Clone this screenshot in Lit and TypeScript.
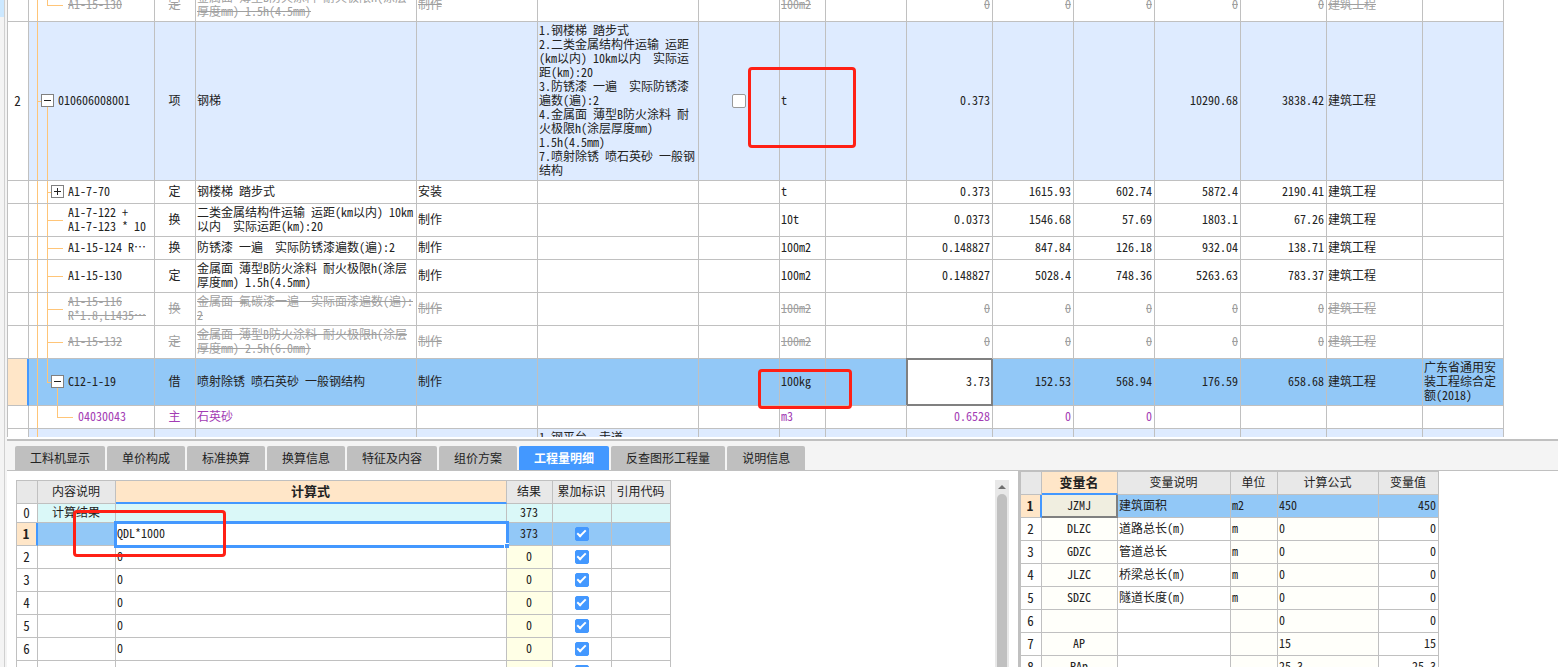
import { LitElement, html, css, nothing } from "lit";
import { customElement } from "lit/decorators.js";
import { classMap } from "lit/directives/class-map.js";

type Branch = "item" | "open" | "closed" | "leaf" | "last-open" | "child" | "trunk";

interface EstimateRow {
  no?: string;
  branch: Branch;
  code: string;
  cut?: boolean;
  kind: string;
  name: string;
  work?: string;
  feature?: string;
  tick?: boolean;
  unit: string;
  values: string[];
  major?: string;
  note?: string;
  tone?: "struck" | "group" | "current" | "material" | "group tail";
}

const ESTIMATE: EstimateRow[] = [
  { branch: "last-open", code: "A1-15-130", kind: "定", name: "金属面 薄型B防火涂料 耐火极限h(涂层\n厚度mm) 1.5h(4.5mm)", work: "制作", unit: "100m2", values: ["0", "0", "0", "0", "0"], major: "建筑工程", tone: "struck" },
  {
    no: "2", branch: "item", code: "010606008001", kind: "项", name: "钢梯",
    feature: "1.钢楼梯 踏步式\n2.二类金属结构件运输 运距\n(km以内) 10km以内  实际运\n距(km):20\n3.防锈漆 一遍  实际防锈漆\n遍数(遍):2\n4.金属面 薄型B防火涂料 耐\n火极限h(涂层厚度mm)\n1.5h(4.5mm)\n7.喷射除锈 喷石英砂 一般钢\n结构",
    tick: true, unit: "t", values: ["0.373", "", "", "10290.68", "3838.42"], major: "建筑工程", tone: "group",
  },
  { branch: "closed", code: "A1-7-70", kind: "定", name: "钢楼梯 踏步式", work: "安装", unit: "t", values: ["0.373", "1615.93", "602.74", "5872.4", "2190.41"], major: "建筑工程" },
  { branch: "leaf", code: "A1-7-122 +\nA1-7-123 * 10", kind: "换", name: "二类金属结构件运输 运距(km以内) 10km\n以内  实际运距(km):20", work: "制作", unit: "10t", values: ["0.0373", "1546.68", "57.69", "1803.1", "67.26"], major: "建筑工程" },
  { branch: "leaf", code: "A1-15-124 R", cut: true, kind: "换", name: "防锈漆 一遍  实际防锈漆遍数(遍):2", work: "制作", unit: "100m2", values: ["0.148827", "847.84", "126.18", "932.04", "138.71"], major: "建筑工程" },
  { branch: "leaf", code: "A1-15-130", kind: "定", name: "金属面 薄型B防火涂料 耐火极限h(涂层\n厚度mm) 1.5h(4.5mm)", work: "制作", unit: "100m2", values: ["0.148827", "5028.4", "748.36", "5263.63", "783.37"], major: "建筑工程" },
  { branch: "leaf", code: "A1-15-116\nR*1.8,L1435", cut: true, kind: "换", name: "金属面 氟碳漆一遍  实际面漆遍数(遍):\n2", work: "制作", unit: "100m2", values: ["0", "0", "0", "0", "0"], major: "建筑工程", tone: "struck" },
  { branch: "leaf", code: "A1-15-132", kind: "定", name: "金属面 薄型B防火涂料 耐火极限h(涂层\n厚度mm) 2.5h(6.0mm)", work: "制作", unit: "100m2", values: ["0", "0", "0", "0", "0"], major: "建筑工程", tone: "struck" },
  { branch: "open", code: "C12-1-19", kind: "借", name: "喷射除锈 喷石英砂 一般钢结构", work: "制作", unit: "100kg", values: ["3.73", "152.53", "568.94", "176.59", "658.68"], major: "建筑工程", note: "广东省通用安\n装工程综合定\n额(2018)", tone: "current" },
  { branch: "child", code: "04030043", kind: "主", name: "石英砂", unit: "m3", values: ["0.6528", "0", "0", "", ""], tone: "material" },
  { branch: "trunk", code: "", kind: "", name: "", feature: "1.钢平台、走道", unit: "", values: ["", "", "", "", ""], tone: "group tail" },
];

const ESTIMATE_COLUMNS = [22, 126, 41, 221, 121, 161, 81, 46, 81, 86, 81, 81, 86, 86, 96, 81];
const FORMULA_COLUMNS = [22, 78, 391, 46, 59, 59];
const VARIABLE_COLUMNS = [22, 76, 113, 47, 101, 60];

const TABS = ["工料机显示", "单价构成", "标准换算", "换算信息", "特征及内容", "组价方案", "工程量明细", "反查图形工程量", "说明信息"];
const ACTIVE_TAB = "工程量明细";

const VARIABLES: string[][] = [
  ["JZMJ", "建筑面积", "m2", "450", "450"],
  ["DLZC", "道路总长(m)", "m", "0", "0"],
  ["GDZC", "管道总长", "m", "0", "0"],
  ["JLZC", "桥梁总长(m)", "m", "0", "0"],
  ["SDZC", "隧道长度(m)", "m", "0", "0"],
  ["", "", "", "0", "0"],
  ["AP", "", "", "15", "15"],
  ["PAp", "", "", "25.3", "25.3"],
];

const total = (widths: number[]) => widths.reduce((sum, w) => sum + w, 0);
const columns = (widths: number[]) => html`<colgroup>${widths.map((w) => html`<col style="width:${w}px">`)}</colgroup>`;

const sheet = css`
  :host {
    display: block;
  }
  table {
    border-collapse: separate;
    border-spacing: 0;
    table-layout: fixed;
  }
  td,
  th {
    box-sizing: border-box;
    height: 23px;
    padding: 1px 2px 3px 1px;
    border: 0 solid #c0c0c0;
    border-width: 0 1px 1px 0;
    font-weight: 400;
    line-height: 14px;
    text-align: left;
    white-space: pre;
    overflow: hidden;
  }
  tr > :first-child {
    border-left-width: 1px;
  }
  .num {
    text-align: right;
  }
  .mid,
  .row-no {
    text-align: center;
  }
  .row-no {
    padding: 2px 2px 2px 1px;
    font-size: 13px;
  }
  .top-edge th {
    border-top-width: 1px;
    height: 24px;
    background: #e8e8e8;
    text-align: center;
  }
  .top-edge .picked {
    background: #ffe6c8;
    border-bottom: 2px solid #4398ff;
    font-size: 13px;
    font-weight: 700;
  }
  .current > .row-no {
    background: #ffe6c8;
    border-right: 2px solid #4398ff;
    font-weight: 700;
  }
  input[type="checkbox"] {
    appearance: none;
    box-sizing: border-box;
    display: inline-grid;
    place-items: center;
    width: 14px;
    height: 14px;
    margin: 0;
    border: 1px solid #999;
    border-radius: 2px;
    background: #fff;
    vertical-align: middle;
  }
  input[type="checkbox"]:checked {
    border-color: #4398ff;
    background: #4398ff;
  }
  input[type="checkbox"]:checked::after {
    content: "";
    width: 7px;
    height: 3px;
    margin-bottom: 3px;
    border: solid #fff;
    border-width: 0 0 2px 2px;
    transform: rotate(-45deg);
  }
  .entry {
    display: block;
    box-sizing: border-box;
    width: 100%;
    padding: 0;
    border: 0;
    outline: 0;
    background: none;
    color: inherit;
    font: inherit;
    text-align: inherit;
  }
`;

@customElement("estimate-sheet")
export class EstimateSheet extends LitElement {
  static styles = [
    sheet,
    css`
      :host {
        overflow: hidden;
      }
      table {
        margin-top: -11px;
      }
      .struck > td {
        color: #a0a0a0;
        text-decoration: line-through;
      }
      .material > td {
        color: #a33cb4;
      }
      .group > td {
        background-color: #deebff;
      }
      .current > td {
        background-color: #92c8f7;
      }
      .tail > td {
        vertical-align: top;
      }
      .tree {
        --wire: linear-gradient(#ffc578, #ffc578);
        padding-left: 39px;
        background-repeat: no-repeat;
      }
      .tree > .line {
        display: flex;
        align-items: center;
      }
      .item {
        padding-left: 12px;
        background-image: var(--wire), var(--wire), var(--wire);
        background-position: 8px 0, 8px 50%, 18px 100%;
        background-size: 1px 100%, 4px 1px, 1px 50%;
      }
      .closed {
        padding-left: 22px;
        background-image: var(--wire), var(--wire), var(--wire);
        background-position: 8px 0, 18px 0, 18px 50%;
        background-size: 1px 100%, 1px 100%, 4px 1px;
      }
      .open {
        padding-left: 22px;
        background-image: var(--wire), var(--wire), var(--wire), var(--wire);
        background-position: 8px 0, 18px 0, 18px 50%, 28px 100%;
        background-size: 1px 100%, 1px 50%, 4px 1px, 1px 50%;
      }
      .leaf {
        background-image: var(--wire), var(--wire), var(--wire);
        background-position: 8px 0, 18px 0, 18px 50%;
        background-size: 1px 100%, 1px 100%, 16px 1px;
      }
      .last-open {
        background-image: var(--wire), var(--wire), var(--wire);
        background-position: 8px 0, 18px 0, 18px 50%;
        background-size: 1px 100%, 1px 50%, 16px 1px;
      }
      .child {
        padding-left: 49px;
        background-image: var(--wire), var(--wire), var(--wire);
        background-position: 8px 0, 28px 0, 28px 50%;
        background-size: 1px 100%, 1px 50%, 16px 1px;
      }
      .trunk {
        background-image: var(--wire);
        background-position: 8px 0;
        background-size: 1px 100%;
      }
      .more {
        font-feature-settings: normal;
      }
      .toggle {
        box-sizing: border-box;
        display: block;
        flex: none;
        width: 13px;
        height: 13px;
        margin: 0 4px 0 0;
        padding: 0;
        border: 1px solid #808080;
        background: #fff;
        white-space: normal;
      }
      .toggle svg {
        display: block;
      }
      .current > .focus {
        background: #fff;
        border-color: #808080;
        box-shadow: -1px -1px 0 #808080, inset 0 0 0 1px #808080;
      }
    `,
  ];

  private toggle(row: EstimateRow) {
    if (!["item", "open", "closed"].includes(row.branch)) return nothing;
    const closed = row.branch === "closed";
    return html`<button class="toggle" aria-label=${closed ? "展开" : "折叠"}>
      <svg width="11" height="11" viewBox="0 0 11 11" stroke="#222" fill="none">
        <path d=${closed ? "M2 5.5H9M5.5 2V9" : "M2 5.5H9"} />
      </svg>
    </button>`;
  }

  private row(row: EstimateRow) {
    const current = row.tone === "current";
    return html`<tr class=${row.tone ?? ""}>
      <th class="row-no" scope="row">${row.no ?? ""}</th>
      <td class="tree ${row.branch}"><div class="line">${this.toggle(row)}<span>${row.code}${row.cut ? html`<span class="more" lang="zh-CN">⋯</span>` : nothing}</span></div></td>
      <td class="mid">${row.kind}</td>
      <td>${row.name}</td>
      <td>${row.work ?? ""}</td>
      <td>${row.feature ?? ""}</td>
      <td class="mid">${row.tick ? html`<input type="checkbox" aria-label="主要清单">` : nothing}</td>
      <td>${row.unit}</td>
      <td></td>
      ${row.values.map((v, i) =>
        current && i === 0
          ? html`<td class="num focus"><input class="entry" aria-label="工程量" .value=${v}></td>`
          : html`<td class="num">${v}</td>`
      )}
      <td>${row.major ?? ""}</td>
      <td>${row.note ?? ""}</td>
    </tr>`;
  }

  render() {
    return html`<table style="width:${total(ESTIMATE_COLUMNS)}px">${columns(ESTIMATE_COLUMNS)}<tbody>${ESTIMATE.map((r) => this.row(r))}</tbody></table>`;
  }
}

@customElement("formula-sheet")
export class FormulaSheet extends LitElement {
  static styles = [
    sheet,
    css`
      .total > td {
        background: #daf8f8;
      }
      .total > td,
      .total > th {
        height: 19px;
      }
      .result {
        background: #ffffe6;
      }
      .current > td {
        background: #92c8f7;
      }
      .current > .editing {
        position: relative;
        overflow: visible;
        background: #fff;
        outline: 3px solid #4398ff;
        outline-offset: -1px;
      }
      .handle {
        position: absolute;
        right: -3px;
        bottom: -3px;
        width: 4px;
        height: 4px;
        border: 1px solid #fff;
        border-width: 1px 0 0 1px;
        background: #4398ff;
      }
    `,
  ];

  render() {
    return html`<table style="width:${total(FORMULA_COLUMNS)}px">
      ${columns(FORMULA_COLUMNS)}
      <thead>
        <tr class="top-edge">
          <th></th>
          <th>内容说明</th>
          <th class="picked">计算式</th>
          <th>结果</th>
          <th>累加标识</th>
          <th>引用代码</th>
        </tr>
      </thead>
      <tbody>
        <tr class="total">
          <th class="row-no" scope="row">0</th>
          <td class="mid">计算结果</td>
          <td></td>
          <td class="mid">373</td>
          <td></td>
          <td></td>
        </tr>
        ${[1, 2, 3, 4, 5, 6, 7].map((n) => html`<tr class=${classMap({ current: n === 1 })}>
          <th class="row-no" scope="row">${n}</th>
          <td></td>
          ${n === 1
            ? html`<td class="editing"><input class="entry" aria-label="计算式" .value=${"QDL*1000"}><span class="handle"></span></td>`
            : html`<td>0</td>`}
          <td class="mid result">${n === 1 ? "373" : "0"}</td>
          <td class="mid"><input type="checkbox" aria-label="累加标识" checked></td>
          <td></td>
        </tr>`)}
      </tbody>
    </table>`;
  }
}

@customElement("variable-sheet")
export class VariableSheet extends LitElement {
  static styles = [
    sheet,
    css`
      .soft {
        background: #fffffa;
      }
      .current > td {
        background: #92c8f7;
      }
      .current > .focus {
        background: #f0eee0;
        border-color: #808080;
        box-shadow: inset -1px -1px 0 #808080;
      }
    `,
  ];

  render() {
    return html`<table style="width:${total(VARIABLE_COLUMNS)}px">
      ${columns(VARIABLE_COLUMNS)}
      <thead>
        <tr class="top-edge">
          <th></th>
          <th class="picked">变量名</th>
          <th>变量说明</th>
          <th>单位</th>
          <th>计算公式</th>
          <th>变量值</th>
        </tr>
      </thead>
      <tbody>
        ${VARIABLES.map(([name, text, unit, formula, value], i) => html`<tr class=${classMap({ current: i === 0 })}>
          <th class="row-no" scope="row">${i + 1}</th>
          <td class="mid soft focus">${name}</td>
          <td>${text}</td>
          <td class="soft">${unit}</td>
          <td class="soft">${formula}</td>
          <td class="num">${value}</td>
        </tr>`)}
      </tbody>
    </table>`;
  }
}

@customElement("app-root")
export class AppRoot extends LitElement {
  static styles = css`
    :host {
      position: relative;
      display: grid;
      grid-template-columns: 7px minmax(0, 1fr);
      grid-template-rows: minmax(0, 1fr);
      height: 100vh;
      overflow: hidden;
      background: #fff;
      color: #222;
      font-family: "Noto Sans CJK SC", sans-serif;
      font-size: 12px;
      line-height: 14px;
      font-feature-settings: "hwid";
    }
    .rail {
      display: grid;
      grid-template-columns: 4px 1px 2px;
      background: #f4f4f4;
    }
    .rail-mark {
      height: 17px;
      background: #cce8ff;
    }
    .rail-line {
      background: #d0d0d0;
    }
    .work {
      display: grid;
      grid-template-rows: minmax(0, 441fr) minmax(0, 226fr);
      min-height: 0;
    }
    .upper {
      display: flex;
      flex-direction: column;
      min-height: 0;
      padding-bottom: 2px;
      border-bottom: 2px solid #c0c0c0;
    }
    .upper estimate-sheet {
      flex: 1;
      min-height: 0;
    }
    .lower {
      display: flex;
      flex-direction: column;
      min-height: 0;
    }
    .tabs {
      display: flex;
      gap: 2px;
      padding: 5px 8px 0;
      border-bottom: 1px solid #c0c0c0;
      background: #f4f4f4;
    }
    .tab {
      height: 24px;
      padding: 0 15px;
      border: 0;
      border-radius: 2px 2px 0 0;
      background: #bfbfbf;
      color: #222;
      font: inherit;
      white-space: nowrap;
    }
    .tab[aria-selected="true"] {
      background: #4398ff;
      color: #fff;
      font-weight: 700;
    }
    .panels {
      display: grid;
      grid-template-columns: minmax(0, 1011fr) minmax(0, 540fr);
      grid-template-rows: minmax(0, 1fr);
      flex: 1;
      min-height: 0;
      overflow: hidden;
    }
    .formulas {
      display: flex;
      justify-content: space-between;
      min-height: 0;
      padding: 9px 9px 0;
    }
    .scroll {
      display: flex;
      flex-direction: column;
      align-items: center;
      width: 14px;
      background: #e8e8e8;
    }
    .thumb {
      flex: 1;
      width: 10px;
      border-radius: 5px 5px 0 0;
      background: #c0c0c0;
    }
    .variables {
      border-left: 2px solid #c0c0c0;
      overflow: hidden;
    }
    .mark {
      position: absolute;
      box-sizing: border-box;
      border: 3px solid #ff2015;
      border-radius: 4px;
      pointer-events: none;
    }
    .mark-item-unit {
      left: 748px;
      top: 67px;
      width: 108px;
      height: 81px;
    }
    .mark-quota-unit {
      left: 758px;
      top: 369px;
      width: 94px;
      height: 40px;
    }
    .mark-formula {
      left: 73px;
      top: 510px;
      width: 153px;
      height: 47px;
    }
  `;

  render() {
    return html`
      <div class="rail"><span class="rail-mark"></span><span class="rail-line"></span></div>
      <main class="work">
        <section class="upper"><estimate-sheet></estimate-sheet></section>
        <section class="lower">
          <div class="tabs" role="tablist">
            ${TABS.map((t) => html`<button class="tab" role="tab" aria-selected=${t === ACTIVE_TAB ? "true" : "false"}>${t}</button>`)}
          </div>
          <div class="panels">
            <div class="formulas">
              <formula-sheet></formula-sheet>
              <div class="scroll">
                <svg width="14" height="14" viewBox="0 0 14 14"><path d="M3 9H11L7 5Z" fill="#707070" /></svg>
                <div class="thumb"></div>
              </div>
            </div>
            <div class="variables"><variable-sheet></variable-sheet></div>
          </div>
        </section>
      </main>
      <div class="mark mark-item-unit"></div>
      <div class="mark mark-quota-unit"></div>
      <div class="mark mark-formula"></div>
    `;
  }
}
